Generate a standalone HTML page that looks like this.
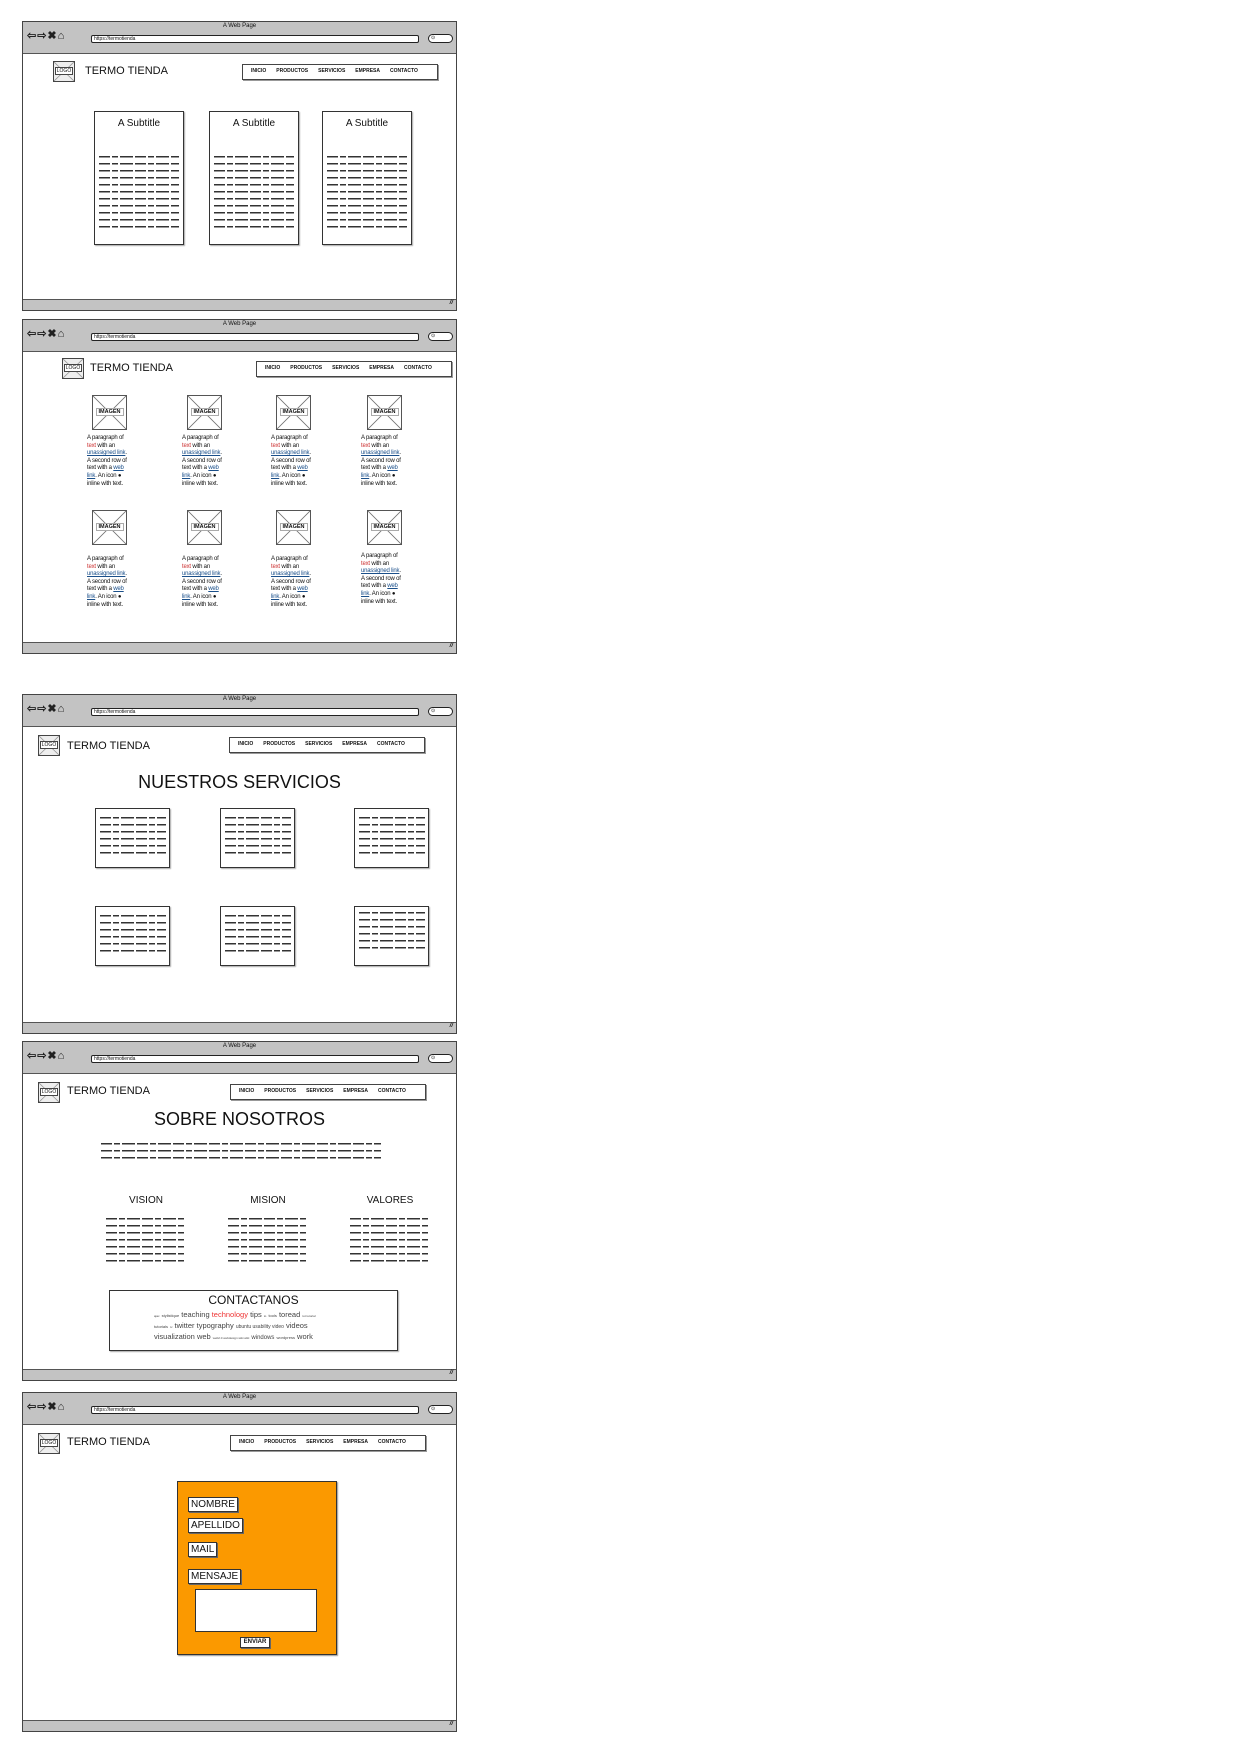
<!DOCTYPE html>
<html><head><meta charset="utf-8">
<style>
*{margin:0;padding:0;box-sizing:border-box}
body{width:1241px;height:1754px;background:#fff;position:relative;font-family:"Liberation Sans",sans-serif;color:#111;overflow:hidden}
.fr{position:absolute;left:22px;width:435px;border:1.5px solid #444;background:#fff}
.fr>*{position:absolute}
.hd{left:0;top:0;width:100%;height:32px;background:#c3c3c3;border-bottom:1.5px solid #555}
.ft{left:0;bottom:0;width:100%;height:11px;background:#c3c3c3;border-top:1.5px solid #555}
.ft:after{content:"//";position:absolute;right:3px;top:0;font-size:6px;font-style:italic;font-weight:bold}
.wt{left:0;width:100%;text-align:center;top:1px;font-size:6px}
.ic{left:4px;top:7px;font-size:11px;letter-spacing:1px;font-weight:bold;color:#222}
.url{left:68px;top:13px;width:328px;height:8px;background:#fff;border:1.2px solid #222;border-radius:2px;font-size:5px;line-height:6px;padding-left:2px}
.sr{left:405px;top:12px;width:25px;height:9px;background:#fff;border:1.2px solid #222;border-radius:5px;font-size:5px;line-height:7px;padding-left:2px}
.logo{width:22px;height:21px;border:1.3px solid #444;background:linear-gradient(to top right,transparent 48%,#999 49%,#999 51%,transparent 52%),linear-gradient(to bottom right,transparent 48%,#999 49%,#999 51%,transparent 52%),#eee;font-size:5px;text-align:center;line-height:19px}
.logo span{background:#fff;padding:0 1px;border:0.5px solid #444}
.tt{font-size:11px;white-space:nowrap}
.nav{width:196px;height:16px;border:1.3px solid #444;box-shadow:1px 1px 0 #999;font-size:5px;font-weight:bold;line-height:13px;padding-left:8px;white-space:nowrap}
.nav b{margin-right:10px}
.ln{background:repeating-linear-gradient(to bottom,#333 0 1.5px,transparent 1.5px 7px);-webkit-mask-image:repeating-linear-gradient(90deg,#000 0 11px,transparent 11px 13px,#000 13px 19px,transparent 19px 21px,#000 21px 34px,transparent 34px 36px);}
.bx{border:1.3px solid #333;box-shadow:1px 1px 1px #aaa;background:#fff}
.bx>*{position:absolute}
.im{width:35px;height:35px;border:1.5px solid #555;background:linear-gradient(to top right,transparent 48.5%,#777 49.5%,#777 50.5%,transparent 51.5%),linear-gradient(to bottom right,transparent 48.5%,#777 49.5%,#777 50.5%,transparent 51.5%),#fff;font-size:5.5px;text-align:center;line-height:32px;font-weight:bold}
.im span{background:#fff;border:0.8px solid #aaa;padding:0 2px}
.pt{font-size:6px;line-height:7.6px;width:42px;letter-spacing:-0.2px}
.pt .r{color:#c33}.pt .u{color:#1a4f8a;text-decoration:underline}
.h1{font-size:18px;width:100%;text-align:center;left:0}
.lb{background:#fff;border:1.3px solid #333;font-size:10px;line-height:13px;padding:0 2px;box-shadow:1px 1px 0 #666}
</style></head><body>

<div class="fr" style="top:21px;height:290px">
<div class="hd"></div><div class="wt">A Web Page</div><div class="ic">⇦⇨✖⌂</div><div class="url">https://termotienda</div><div class="sr">⊙</div>
<div class="logo" style="left:30px;top:39px"><span>LOGO</span></div>
<div class="tt" style="left:62px;top:43px">TERMO TIENDA</div>
<div class="nav" style="left:219px;top:42px"><b>INICIO</b><b>PRODUCTOS</b><b>SERVICIOS</b><b>EMPRESA</b><b>CONTACTO</b></div>
<div class="bx" style="left:71px;top:89px;width:90px;height:134px"><div style="left:0;width:100%;text-align:center;top:6px;font-size:10px">A Subtitle</div><div class="ln" style="left:4px;top:44px;width:80px;height:76px"></div></div>
<div class="bx" style="left:186px;top:89px;width:90px;height:134px"><div style="left:0;width:100%;text-align:center;top:6px;font-size:10px">A Subtitle</div><div class="ln" style="left:4px;top:44px;width:80px;height:76px"></div></div>
<div class="bx" style="left:299px;top:89px;width:90px;height:134px"><div style="left:0;width:100%;text-align:center;top:6px;font-size:10px">A Subtitle</div><div class="ln" style="left:4px;top:44px;width:80px;height:76px"></div></div>
<div class="ft"></div>
</div>

<div class="fr" style="top:319px;height:335px">
<div class="hd"></div><div class="wt">A Web Page</div><div class="ic">⇦⇨✖⌂</div><div class="url">https://termotienda</div><div class="sr">⊙</div>
<div class="logo" style="left:39px;top:38px"><span>LOGO</span></div>
<div class="tt" style="left:67px;top:42px">TERMO TIENDA</div>
<div class="nav" style="left:233px;top:41px"><b>INICIO</b><b>PRODUCTOS</b><b>SERVICIOS</b><b>EMPRESA</b><b>CONTACTO</b></div>

<div class="im" style="left:69px;top:75px"><span>IMAGEN</span></div>
<div class="im" style="left:164px;top:75px"><span>IMAGEN</span></div>
<div class="im" style="left:253px;top:75px"><span>IMAGEN</span></div>
<div class="im" style="left:344px;top:75px"><span>IMAGEN</span></div>
<div class="pt" style="left:64px;top:115px">A paragraph of <span class="r">text</span> with an <span class="u">unassigned link</span>. A second row of text with a <span class="u">web link</span>. An icon ● inline with text.</div>
<div class="pt" style="left:159px;top:115px">A paragraph of <span class="r">text</span> with an <span class="u">unassigned link</span>. A second row of text with a <span class="u">web link</span>. An icon ● inline with text.</div>
<div class="pt" style="left:248px;top:115px">A paragraph of <span class="r">text</span> with an <span class="u">unassigned link</span>. A second row of text with a <span class="u">web link</span>. An icon ● inline with text.</div>
<div class="pt" style="left:338px;top:115px">A paragraph of <span class="r">text</span> with an <span class="u">unassigned link</span>. A second row of text with a <span class="u">web link</span>. An icon ● inline with text.</div>

<div class="im" style="left:69px;top:190px"><span>IMAGEN</span></div>
<div class="im" style="left:164px;top:190px"><span>IMAGEN</span></div>
<div class="im" style="left:253px;top:190px"><span>IMAGEN</span></div>
<div class="im" style="left:344px;top:190px"><span>IMAGEN</span></div>
<div class="pt" style="left:64px;top:236px">A paragraph of <span class="r">text</span> with an <span class="u">unassigned link</span>. A second row of text with a <span class="u">web link</span>. An icon ● inline with text.</div>
<div class="pt" style="left:159px;top:236px">A paragraph of <span class="r">text</span> with an <span class="u">unassigned link</span>. A second row of text with a <span class="u">web link</span>. An icon ● inline with text.</div>
<div class="pt" style="left:248px;top:236px">A paragraph of <span class="r">text</span> with an <span class="u">unassigned link</span>. A second row of text with a <span class="u">web link</span>. An icon ● inline with text.</div>
<div class="pt" style="left:338px;top:233px">A paragraph of <span class="r">text</span> with an <span class="u">unassigned link</span>. A second row of text with a <span class="u">web link</span>. An icon ● inline with text.</div>
<div class="ft"></div>
</div>

<div class="fr" style="top:694px;height:340px">
<div class="hd"></div><div class="wt">A Web Page</div><div class="ic">⇦⇨✖⌂</div><div class="url">https://termotienda</div><div class="sr">⊙</div>
<div class="logo" style="left:15px;top:40px"><span>LOGO</span></div>
<div class="tt" style="left:44px;top:45px">TERMO TIENDA</div>
<div class="nav" style="left:206px;top:42px"><b>INICIO</b><b>PRODUCTOS</b><b>SERVICIOS</b><b>EMPRESA</b><b>CONTACTO</b></div>
<div class="h1" style="top:77px">NUESTROS SERVICIOS</div>
<div class="bx" style="left:72px;top:113px;width:75px;height:60px"><div class="ln" style="left:4px;top:8px;width:66px;height:42px"></div></div>
<div class="bx" style="left:197px;top:113px;width:75px;height:60px"><div class="ln" style="left:4px;top:8px;width:66px;height:42px"></div></div>
<div class="bx" style="left:331px;top:113px;width:75px;height:60px"><div class="ln" style="left:4px;top:8px;width:66px;height:42px"></div></div>
<div class="bx" style="left:72px;top:211px;width:75px;height:60px"><div class="ln" style="left:4px;top:8px;width:66px;height:42px"></div></div>
<div class="bx" style="left:197px;top:211px;width:75px;height:60px"><div class="ln" style="left:4px;top:8px;width:66px;height:42px"></div></div>
<div class="bx" style="left:331px;top:211px;width:75px;height:60px"><div class="ln" style="left:4px;top:5px;width:66px;height:42px"></div></div>
<div class="ft"></div>
</div>

<div class="fr" style="top:1041px;height:340px">
<div class="hd"></div><div class="wt">A Web Page</div><div class="ic">⇦⇨✖⌂</div><div class="url">https://termotienda</div><div class="sr">⊙</div>
<div class="logo" style="left:15px;top:40px"><span>LOGO</span></div>
<div class="tt" style="left:44px;top:43px">TERMO TIENDA</div>
<div class="nav" style="left:207px;top:42px"><b>INICIO</b><b>PRODUCTOS</b><b>SERVICIOS</b><b>EMPRESA</b><b>CONTACTO</b></div>
<div class="h1" style="top:67px">SOBRE NOSOTROS</div>
<div class="ln" style="left:78px;top:101px;width:280px;height:16px"></div>
<div style="left:95px;top:153px;font-size:10px;width:56px;text-align:center">VISION</div>
<div style="left:217px;top:153px;font-size:10px;width:56px;text-align:center">MISION</div>
<div style="left:339px;top:153px;font-size:10px;width:56px;text-align:center">VALORES</div>
<div class="ln" style="left:83px;top:176px;width:78px;height:44px"></div>
<div class="ln" style="left:205px;top:176px;width:78px;height:44px"></div>
<div class="ln" style="left:327px;top:176px;width:78px;height:44px"></div>
<div class="bx" style="left:86px;top:248px;width:289px;height:61px">
<div style="left:0;width:100%;text-align:center;top:2px;font-size:12px">CONTACTANOS</div>
<div style="left:44px;top:19px;width:205px;font-size:7.5px;line-height:10px;color:#444;white-space:nowrap">
<span style="font-size:3px">ajax</span> <span style="font-size:4px">stylistique</span> teaching <span style="color:#e33">technology</span> tips <span style="font-size:3px">to</span> <span style="font-size:4px">tools</span> toread <span style="font-size:3px">tut tutorial</span><br>
<span style="font-size:4px">tutorials</span> <span style="font-size:3px">tv</span> twitter typography <span style="font-size:5px">ubuntu usability video</span> videos<br>
visualization web <span style="font-size:3px">web2.0 webdesign wiki wiki</span> <span style="font-size:6px">windows</span> <span style="font-size:4px">wordpress</span> work</div>
</div>
<div class="ft"></div>
</div>

<div class="fr" style="top:1392px;height:340px">
<div class="hd"></div><div class="wt">A Web Page</div><div class="ic">⇦⇨✖⌂</div><div class="url">https://termotienda</div><div class="sr">⊙</div>
<div class="logo" style="left:15px;top:40px"><span>LOGO</span></div>
<div class="tt" style="left:44px;top:43px">TERMO TIENDA</div>
<div class="nav" style="left:207px;top:42px"><b>INICIO</b><b>PRODUCTOS</b><b>SERVICIOS</b><b>EMPRESA</b><b>CONTACTO</b></div>
<div style="left:154px;top:88px;width:160px;height:174px;background:#fb9900;border:1.3px solid #333;box-shadow:1px 1px 1px #999"></div>
<div class="lb" style="left:165px;top:104px">NOMBRE</div>
<div class="lb" style="left:165px;top:125px">APELLIDO</div>
<div class="lb" style="left:165px;top:149px">MAIL</div>
<div class="lb" style="left:165px;top:176px">MENSAJE</div>
<div style="left:172px;top:196px;width:122px;height:43px;background:#fff;border:1.3px solid #333"></div>
<div class="lb" style="left:217px;top:244px;font-size:6px;line-height:9px;font-weight:bold;width:30px;text-align:center">ENVIAR</div>
<div class="ft"></div>
</div>

</body></html>
